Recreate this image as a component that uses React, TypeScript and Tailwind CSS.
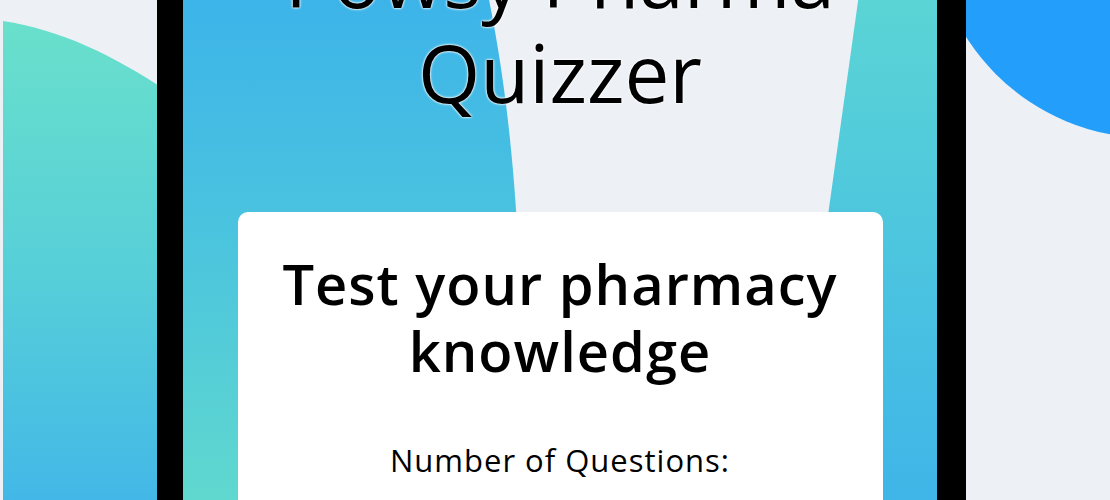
import React from "react";

function OuterBackground() {
  return (
    <svg
      className="absolute inset-0"
      width="1110"
      height="500"
      viewBox="0 0 1110 500"
      aria-hidden="true"
    >
      <defs>
        <linearGradient id="outerTeal" x1="0" y1="0" x2="0" y2="1">
          <stop offset="0" stopColor="#69e0cb" />
          <stop offset="0.5" stopColor="#57cfd8" />
          <stop offset="1" stopColor="#41b6e9" />
        </linearGradient>
      </defs>
      <path
        d="M3,21 C60,30 110,53 170,93 L170,520 L3,520 Z"
        fill="url(#outerTeal)"
      />
      <circle cx="1150" cy="-80" r="218" fill="#239ffb" />
    </svg>
  );
}

function ScreenBackground() {
  return (
    <svg
      className="absolute left-0 top-0"
      width="754"
      height="700"
      viewBox="0 0 754 700"
      aria-hidden="true"
    >
      <defs>
        <linearGradient id="leftBlob" x1="0" y1="0" x2="0" y2="500" gradientUnits="userSpaceOnUse">
          <stop offset="0" stopColor="#3db4e9" />
          <stop offset="0.45" stopColor="#4ac3df" />
          <stop offset="1" stopColor="#60d8cf" />
        </linearGradient>
        <linearGradient id="rightBlob" x1="0" y1="0" x2="0" y2="500" gradientUnits="userSpaceOnUse">
          <stop offset="0" stopColor="#5bd4d5" />
          <stop offset="0.5" stopColor="#4cc5df" />
          <stop offset="1" stopColor="#3fb5e8" />
        </linearGradient>
      </defs>
      <path
        d="M0,-20 L302,-20 C319,60 334,160 338,320 L338,700 L0,700 Z"
        fill="url(#leftBlob)"
      />
      <path
        d="M678,-20 L754,-20 L754,700 L577,700 Z"
        fill="url(#rightBlob)"
      />
    </svg>
  );
}

export default function App() {
  return (
    <div className="relative w-[1110px] h-[500px] overflow-hidden bg-[#edf1f6]">
      <OuterBackground />
      <div className="relative ml-[157px] w-[809px] h-[700px] border-l-[26px] border-r-[29px] border-black bg-[#edf1f6] overflow-hidden">
        <ScreenBackground />
        <div className="relative flex flex-col items-center">
          <h1
            className="-mt-[71px] text-center text-[80px] leading-[95px] font-medium text-black [text-shadow:0_0_3px_#fff,0_0_2px_#fff,0_0_1px_#fff]"
            style={{ fontFamily: '"Open Sans", sans-serif' }}
          >
            Powsy Pharma
            <br />
            Quizzer
          </h1>
          <div
            className="mt-[93px] w-[645px] h-[400px] rounded-[10px] bg-white pt-[38px] flex flex-col items-center text-black"
            style={{ fontFamily: '"Open Sans", sans-serif' }}
          >
            <h2 className="text-center text-[56px] leading-[67px] font-semibold tracking-[1px]">
              Test your pharmacy
              <br />
              knowledge
            </h2>
            <p className="mt-[58px] text-[31px] leading-[36px] font-normal tracking-[1px]">
              Number of Questions:
            </p>
          </div>
        </div>
      </div>
    </div>
  );
}
